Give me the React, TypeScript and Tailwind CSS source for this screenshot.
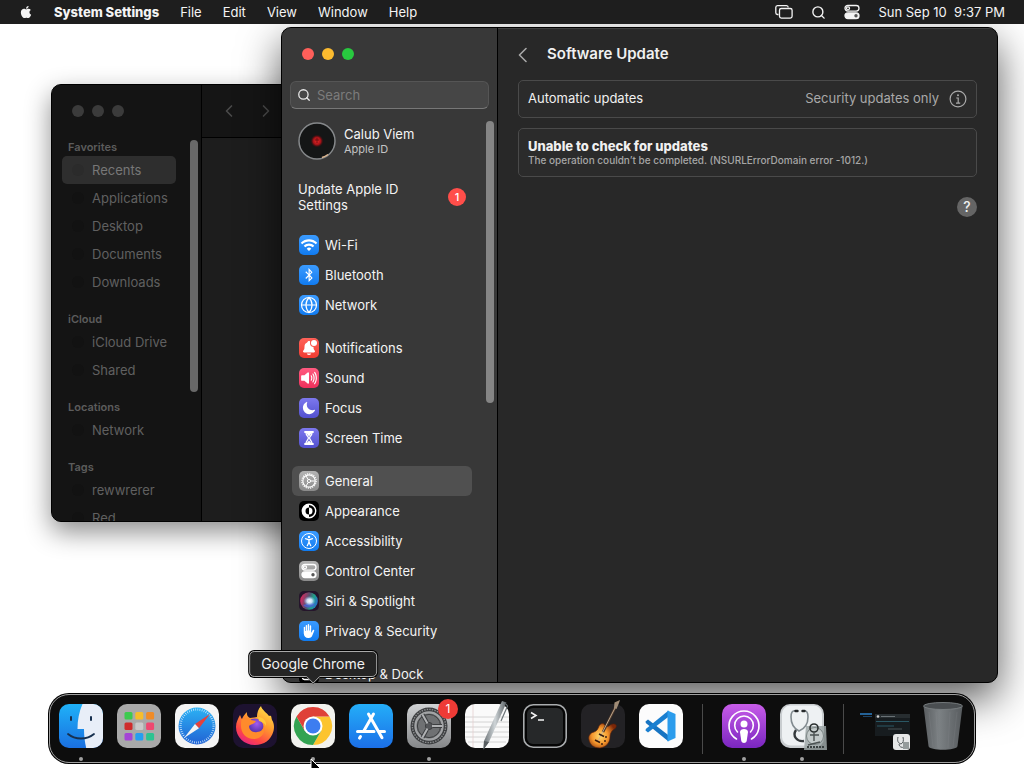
import type { ReactNode } from "react";
import { clsx } from "clsx";
import { FaApple, FaBluetoothB } from "react-icons/fa6";
import { IoHandLeft, IoMoon, IoNotifications, IoVolumeHigh } from "react-icons/io5";
import { MdWifi } from "react-icons/md";
import { ChevronLeft, ChevronRight, Globe, PersonStanding, Search } from "lucide-react";

const menus = ["File", "Edit", "View", "Window", "Help"];

const finderSections = [
  { title: "Favorites", items: ["Recents", "Applications", "Desktop", "Documents", "Downloads"] },
  { title: "iCloud", items: ["iCloud Drive", "Shared"] },
  { title: "Locations", items: ["Network"] },
  { title: "Tags", items: ["rewwrerer", "Red"] },
];

const blue = "bg-linear-to-b from-[#3a9bff] to-[#0f7bf0]";
const purple = "bg-linear-to-b from-[#7d78ee] to-[#5350cf]";
const gray = "bg-linear-to-b from-[#b4b4b4] to-[#8a8a8a]";

const settingsGroups: { label: string; tile: string; icon: ReactNode }[][] = [
  [
    { label: "Wi-Fi", tile: blue, icon: <MdWifi className="size-[18px]" /> },
    { label: "Bluetooth", tile: blue, icon: <FaBluetoothB className="size-3.5" /> },
    { label: "Network", tile: blue, icon: <Globe className="size-[18px]" strokeWidth={1.6} /> },
  ],
  [
    {
      label: "Notifications",
      tile: "bg-linear-to-b from-[#ff6259] to-[#f03a30]",
      icon: <BellIcon />,
    },
    {
      label: "Sound",
      tile: "bg-linear-to-b from-[#ff5a80] to-[#ee2f5b]",
      icon: <IoVolumeHigh className="size-[18px]" />,
    },
    { label: "Focus", tile: purple, icon: <IoMoon className="size-3.5" /> },
    { label: "Screen Time", tile: purple, icon: <HourglassIcon /> },
  ],
  [
    { label: "General", tile: gray, icon: <SmallGearIcon /> },
    { label: "Appearance", tile: "bg-black", icon: <AppearanceIcon /> },
    { label: "Accessibility", tile: blue, icon: <AccessibilityIcon /> },
    { label: "Control Center", tile: gray, icon: <SwitchesIcon className="size-4" /> },
    { label: "Siri & Spotlight", tile: "bg-[#25152b]", icon: <SiriIcon /> },
    { label: "Privacy & Security", tile: blue, icon: <IoHandLeft className="size-3.5" /> },
  ],
  [{ label: "Desktop & Dock", tile: "bg-black", icon: <DesktopIcon /> }],
];

function BellIcon() {
  return (
    <span className="relative">
      <IoNotifications className="size-4" />
      <span className="absolute top-0 right-0 size-1.5 rounded-full bg-white ring-1 ring-[#f8544b]" />
    </span>
  );
}

function HourglassIcon() {
  return (
    <svg viewBox="0 0 16 16" className="size-4" fill="none" stroke="currentColor" strokeWidth="1.3">
      <path d="M4 2h8M4 14h8" strokeWidth="1.8" strokeLinecap="round" />
      <path d="M5 2.5c0 3 2.4 4 2.4 5.500S5 11 5 13.500M11 2.500c0 3-2.400 4-2.400 5.500S11 11 11 13.500" />
      <path d="M5.500 3h5L8 6.500zM5.500 13.300 8 10.500l2.500 2.800z" fill="currentColor" stroke="none" />
    </svg>
  );
}

function SmallGearIcon() {
  return (
    <svg viewBox="0 0 16 16" className="size-4" fill="none" stroke="currentColor">
      <circle cx="8" cy="8" r="7.200" strokeWidth="1.200" strokeDasharray="1.100 1.162" />
      <circle cx="8" cy="8" r="6.200" strokeWidth="1.200" />
      <circle cx="8" cy="8" r="1.600" />
      <path d="M9.600 8h4.200M7.200 6.600 5 2.900M7.200 9.400 5 13.100" />
    </svg>
  );
}

function AppearanceIcon() {
  return (
    <svg viewBox="0 0 16 16" className="size-4">
      <circle cx="8" cy="8" r="6.700" fill="#000" stroke="#fff" strokeWidth="1.400" />
      <path d="M8 1.300a6.700 6.700 0 0 0 0 13.400z" fill="#fff" />
      <path d="M8 4.500a3.500 3.500 0 0 1 0 7z" fill="#fff" />
      <path d="M8 4.500a3.500 3.500 0 0 0 0 7z" fill="#000" />
    </svg>
  );
}

function AccessibilityIcon() {
  return (
    <span className="flex size-4 items-center justify-center rounded-full border border-white">
      <PersonStanding className="size-3.5" strokeWidth={2.2} />
    </span>
  );
}

function SwitchesIcon({ className }: { className?: string }) {
  return (
    <svg viewBox="0 0 16 16" className={className} fill="none" stroke="currentColor" strokeWidth="1.300">
      <rect x="1" y="1.500" width="14" height="5.600" rx="2.800" />
      <circle cx="4" cy="4.300" r="1.500" />
      <rect x="1" y="8.900" width="14" height="5.800" rx="2.900" fill="currentColor" />
      <circle cx="12" cy="11.800" r="1.700" fill="#555" stroke="none" />
    </svg>
  );
}

function SiriIcon() {
  return (
    <svg viewBox="0 0 20 20" className="size-5">
      <defs>
        <linearGradient id="siri-ring" x1="0" y1="0.300" x2="1" y2="0.600">
          <stop offset="0" stopColor="#e2265f" />
          <stop offset="0.450" stopColor="#54526f" />
          <stop offset="0.700" stopColor="#1fa287" />
          <stop offset="1" stopColor="#2a6fd0" />
        </linearGradient>
        <radialGradient id="siri-core">
          <stop offset="0" stopColor="#fff" />
          <stop offset="0.450" stopColor="#d8e8ff" stopOpacity="0.900" />
          <stop offset="1" stopColor="#7fb4e8" stopOpacity="0" />
        </radialGradient>
      </defs>
      <circle cx="10" cy="10" r="8.800" fill="url(#siri-ring)" />
      <path d="M4 14c4-1 7-4 12-1-2 4-8 5-12 1z" fill="#4b62d8" opacity="0.800" />
      <ellipse cx="10.500" cy="10" rx="6" ry="5" fill="url(#siri-core)" />
    </svg>
  );
}

function DesktopIcon() {
  return (
    <svg viewBox="0 0 16 16" className="size-4" fill="none" stroke="currentColor" strokeWidth="1.400">
      <rect x="1.500" y="2.500" width="13" height="11" rx="2" />
      <path d="M4 11h8" />
    </svg>
  );
}

function StageIcon() {
  return (
    <svg viewBox="0 0 18 14" className="h-3.5 w-[18px]" fill="none" stroke="currentColor" strokeWidth="1.300">
      <path d="M3.500 9.500h-1A1.800 1.800 0 0 1 .8 7.700V2.500A1.800 1.800 0 0 1 2.500.7h9a1.800 1.800 0 0 1 1.700 1.800" />
      <rect x="4.500" y="3.500" width="12.600" height="9.600" rx="1.800" />
    </svg>
  );
}

function MenuBar() {
  return (
    <header className="relative z-30 flex h-6 items-center justify-between bg-[#1e1e1e] pr-[19px] pl-[19px] text-[13px] leading-4 text-[#f4f4f4]">
      <nav className="flex items-center gap-[21px]">
        <button aria-label="Apple menu">
          <FaApple className="size-3.5" />
        </button>
        <button className="font-extrabold">System Settings</button>
        {menus.map((menu) => (
          <button key={menu}>{menu}</button>
        ))}
      </nav>
      <div className="flex items-center gap-[18px]">
        <button aria-label="Stage Manager">
          <StageIcon />
        </button>
        <button aria-label="Spotlight">
          <Search className="size-[15px]" strokeWidth={2.2} />
        </button>
        <button aria-label="Control Center">
          <SwitchesIcon className="size-4" />
        </button>
        <button className="whitespace-pre">{"Sun Sep 10  9:37 PM"}</button>
      </div>
    </header>
  );
}

function TrafficLights({ active }: { active?: boolean }) {
  return (
    <div className="flex gap-2">
      <button aria-label="Close" className={clsx("size-3 rounded-full", active ? "bg-[#ff5f5a]" : "bg-[#3b3b3b]")} />
      <button aria-label="Minimize" className={clsx("size-3 rounded-full", active ? "bg-[#fcbb2f]" : "bg-[#3b3b3b]")} />
      <button aria-label="Zoom" className={clsx("size-3 rounded-full", active ? "bg-[#28c93f]" : "bg-[#3b3b3b]")} />
    </div>
  );
}

function FinderWindow() {
  return (
    <section
      aria-label="Finder"
      className="absolute top-[84px] left-[51px] flex h-[438px] w-[600px] overflow-hidden rounded-[10px] border border-black bg-[#1d1d1d] shadow-[0_10px_26px_rgba(0,0,0,0.450)]"
    >
      <aside className="relative w-[150px] shrink-0 border-r border-black bg-[#141414]">
        <div className="flex h-[53px] items-center pb-0.5 pl-5">
          <TrafficLights />
        </div>
        <div className="flex flex-col gap-3.5 pr-[25px] pl-2.5">
          {finderSections.map((section) => (
            <div key={section.title}>
              <h2 className="pl-1.5 text-[11px] leading-[18px] font-semibold text-[#5c5c5c]">{section.title}</h2>
              {section.items.map((item) => (
                <a
                  key={item}
                  href="#"
                  className={clsx(
                    "flex h-7 items-center gap-2 rounded-[5px] pl-2.5 text-[13px] leading-4 whitespace-nowrap",
                    item === "Recents" ? "bg-[#2e2e2e] text-[#777777]" : "text-[#606060]"
                  )}
                >
                  <span className={clsx("size-3 rounded-full", item === "Recents" ? "bg-[#2b2b2b]" : "bg-[#121212]")} />
                  {item}
                </a>
              ))}
            </div>
          ))}
        </div>
        <div className="absolute top-[55px] right-[3px] h-[252px] w-2 rounded-full bg-[#686868]" />
      </aside>
      <div className="grow">
        <div className="flex h-[53px] items-center gap-[17px] border-b border-black bg-[#151515] pl-[17px] text-[#4a4a4a]">
          <button aria-label="Back">
            <ChevronLeft className="size-5" />
          </button>
          <button aria-label="Forward">
            <ChevronRight className="size-5" />
          </button>
        </div>
      </div>
    </section>
  );
}

function SettingsSidebar() {
  return (
    <aside className="relative flex w-[216px] shrink-0 flex-col border-r border-black bg-[#383838]">
      <div className="flex h-[53px] shrink-0 items-center pb-0.5 pl-5">
        <TrafficLights active />
      </div>
      <label className="mx-2 flex h-7 shrink-0 items-center gap-1.5 rounded-md border border-[#555555] border-b-[#777777] bg-[#464646] px-1.5">
        <Search className="size-3.5 shrink-0 text-[#e8e8e8]" strokeWidth={2.2} />
        <input
          type="text"
          aria-label="Search"
          placeholder="Search"
          className="h-4 w-full min-w-0 bg-transparent text-[13px] leading-4 text-white outline-none placeholder:text-[#7c7c7c]"
        />
      </label>
      <nav className="mt-3 ml-2.5 min-h-0 w-[180px] grow text-[13px] leading-4 text-[#f4f4f4]">
        <a href="#" className="flex h-10 items-center gap-2 px-1.5">
          <Avatar />
          <span>
            <span className="block">Calub Viem</span>
            <span className="block text-[11px] leading-3.5 text-[#c4c4c4]">Apple ID</span>
          </span>
        </a>
        <a href="#" className="mt-5 flex h-8 items-center justify-between px-1.5">
          <span className="w-28">Update Apple ID Settings</span>
          <span className="flex size-[18px] items-center justify-center rounded-full bg-[#ff4e4a] text-[11px] font-medium text-white">
            1
          </span>
        </a>
        <div className="mt-[17px] flex flex-col gap-[13px]">
          {settingsGroups.map((group) => (
            <ul key={group[0].label}>
              {group.map(({ label, tile, icon }) => (
                <li key={label}>
                  <a
                    href="#"
                    className={clsx(
                      "flex h-[30px] items-center gap-1.5 rounded-md px-[7px]",
                      label === "General" && "bg-[#505050]"
                    )}
                  >
                    <span className={clsx("flex size-5 items-center justify-center rounded-[5px] text-white", tile)}>
                      {icon}
                    </span>
                    {label}
                  </a>
                </li>
              ))}
            </ul>
          ))}
        </div>
      </nav>
      <div className="absolute top-[93px] right-[3px] h-[282px] w-2 rounded-full bg-[#858585]" />
    </aside>
  );
}

function Avatar() {
  return (
    <svg viewBox="0 0 38 38" className="size-[38px] shrink-0">
      <defs>
        <radialGradient id="avatar-eye">
          <stop offset="0" stopColor="#f02a2a" />
          <stop offset="0.600" stopColor="#a01217" />
          <stop offset="1" stopColor="#400a0c" stopOpacity="0" />
        </radialGradient>
      </defs>
      <circle cx="19" cy="19" r="18" fill="#141616" stroke="#85888a" strokeWidth="1.500" />
      <path d="M24 35.500a18 18 0 0 0 6-3" stroke="#e0b890" strokeWidth="1.500" fill="none" />
      <circle cx="19" cy="19" r="6.500" fill="url(#avatar-eye)" />
      <path d="M17 18h4M19 16v5" stroke="#5a0a0c" strokeWidth="0.800" />
    </svg>
  );
}

function SettingsWindow() {
  return (
    <section
      aria-label="System Settings"
      className="absolute top-[27px] left-[281px] z-10 flex h-[656px] w-[717px] overflow-hidden rounded-[10px] border border-black bg-[#282828] shadow-[0_16px_42px_rgba(0,0,0,0.650)]"
    >
      <SettingsSidebar />
      <main className="grow border-t border-[#3f3f3f] px-5 text-[#f0f0f0]">
        <div className="flex h-[51px] items-center gap-5">
          <button aria-label="Back">
            <svg viewBox="0 0 9 16" className="h-4 w-[9px]" fill="none" stroke="#a8a8a8" strokeWidth="1.600" strokeLinecap="round" strokeLinejoin="round">
              <path d="M8 1.500 1.500 8 8 14.500" />
            </svg>
          </button>
          <h1 className="text-[15px] font-semibold">Software Update</h1>
        </div>
        <div className="flex h-[38px] items-center justify-between rounded-[5px] border border-[#4a4a4a] bg-[#2b2b2b] px-[9px] text-[13px]">
          <span>Automatic updates</span>
          <span className="flex items-center gap-2.5 text-[#a9a9a9]">
            Security updates only
            <button aria-label="About automatic updates">
              <svg viewBox="0 0 18 18" className="size-[18px]" fill="none" stroke="currentColor" strokeWidth="1.200">
                <circle cx="9" cy="9" r="7.900" />
                <circle cx="9" cy="5.200" r="1" fill="currentColor" stroke="none" />
                <path d="M7.200 8h2v5M7 13.200h4.200" />
              </svg>
            </button>
          </span>
        </div>
        <div className="mt-2.5 flex h-[49px] flex-col justify-center rounded-[5px] border border-[#4a4a4a] bg-[#2b2b2b] px-[9px]">
          <h2 className="text-[13px] leading-[15px] font-extrabold">Unable to check for updates</h2>
          <p className="text-[10px] leading-[13px] font-medium text-[#a6a6a6]">
            The operation couldn’t be completed. (NSURLErrorDomain error -1012.)
          </p>
        </div>
        <div className="mt-5 flex justify-end">
          <button className="size-5 rounded-full bg-[#656565] text-[14px] leading-5 font-medium">?</button>
        </div>
      </main>
    </section>
  );
}

// Dock artwork, drawn on a 44 unit tile

function FinderArt() {
  return (
    <>
      <defs>
        <linearGradient id="finder-a" x2="0" y2="1">
          <stop stopColor="#1fb1f8" />
          <stop offset="1" stopColor="#1a6fe0" />
        </linearGradient>
        <clipPath id="finder-clip">
          <rect width="44" height="44" rx="10" />
        </clipPath>
      </defs>
      <g clipPath="url(#finder-clip)">
        <rect width="44" height="44" fill="url(#finder-a)" />
        <path d="M23.500 0C20 8 18.500 16 18.500 25h6.500c0 7 .8 13 2.200 19H44V0z" fill="#e8eef8" />
      </g>
      <path d="M12 13v3M32 13v3" stroke="#17304f" strokeWidth="2" strokeLinecap="round" />
      <path d="M9 30c7 6 19 6 26 0" stroke="#17304f" strokeWidth="1.800" strokeLinecap="round" fill="none" />
    </>
  );
}

const padColors = ["#3cca4e", "#f6bd2b", "#f08b26", "#cf2b2b", "#c9c9c9", "#ee4870", "#a444d6", "#269ef0", "#2cc391"];

function LaunchpadArt() {
  return (
    <>
      <rect width="44" height="44" rx="10" fill="#a9a9a9" />
      {padColors.map((color, i) => (
        <rect key={color} x={7.5 + (i % 3) * 10.8} y={8 + Math.floor(i / 3) * 10.500} width="8" height="7.500" rx="1.500" fill={color} />
      ))}
    </>
  );
}

function SafariArt() {
  return (
    <>
      <defs>
        <linearGradient id="safari-a" x2="0" y2="1">
          <stop stopColor="#2cb2f4" />
          <stop offset="1" stopColor="#2162d4" />
        </linearGradient>
      </defs>
      <rect width="44" height="44" rx="10" fill="#f4f4f4" />
      <circle cx="22" cy="22" r="18.500" fill="url(#safari-a)" />
      <circle cx="22" cy="22" r="16.500" fill="none" stroke="#d4ecff" strokeWidth="2.200" strokeDasharray="0.700 1.460" />
      <path d="M35 10 24 24.200 20 20z" fill="#e5413c" />
      <path d="M9 34l11-14 4 4.200z" fill="#f3f3f3" />
    </>
  );
}

function FirefoxArt() {
  return (
    <>
      <defs>
        <linearGradient id="fox-a" x1="0.800" y1="0" x2="0.200" y2="1">
          <stop stopColor="#ffe14a" />
          <stop offset="0.400" stopColor="#ff9a2e" />
          <stop offset="0.750" stopColor="#ff4546" />
          <stop offset="1" stopColor="#e3208a" />
        </linearGradient>
        <radialGradient id="fox-b" cx="0.600" cy="0.300">
          <stop stopColor="#a45cf0" />
          <stop offset="1" stopColor="#5a34b0" />
        </radialGradient>
      </defs>
      <rect width="44" height="44" rx="10" fill="#1d1230" />
      <path
        d="M28 2c1 4 5 6 8 10 3-1 2 1 3 4 2 3 2.500 7 1.500 11C38 36 31 41 22 41 11 41 3 33 3 23c0-5 2-8 4-12 1 2 1 3 2 4 1-3 3-5 5-7-.5 3 1 5 3 6l7-1c0-4 1-8 4-11z"
        fill="url(#fox-a)"
      />
      <circle cx="22" cy="23" r="8.500" fill="url(#fox-b)" />
      <path d="M9 15c4-2 7-1 9 1l5 1c-1 3-5 3-7 5 0 4 4 7 8 6 4 0 6-3 7-6 2 7-3 13-10 13-8 0-13-6-13-13 0-3 0-5 1-7z" fill="#ff8b2c" />
      <path d="M25 13c5 0 9 4 8 9-1-3-4-4-7-5z" fill="#ffc83a" />
    </>
  );
}

function ChromeArt() {
  return (
    <>
      <rect width="44" height="44" rx="10" fill="#f2f2ee" />
      <path d="M38.500 12.500A19 19 0 0 1 22 41l8.200-14.300L22 12.500z" fill="#fcc42e" />
      <path d="M5.500 12.500A19 19 0 0 0 22 41l8.200-14.300L22 31l-8.200-4.300z" fill="#33a352" />
      <path d="M22 12.500h16.500A19 19 0 0 0 5.500 12.500l8.300 14.200z" fill="#df4138" />
      <circle cx="22" cy="22" r="9.500" fill="#fff" />
      <circle cx="22" cy="22" r="7.500" fill="#3d7df0" />
    </>
  );
}

function AppStoreArt() {
  return (
    <>
      <defs>
        <linearGradient id="store-a" x2="0" y2="1">
          <stop stopColor="#24aef8" />
          <stop offset="1" stopColor="#1b6fe8" />
        </linearGradient>
      </defs>
      <rect width="44" height="44" rx="10" fill="url(#store-a)" />
      <path d="M24.500 10 14.500 27.500M11.500 32.500l-1 1.600M19.500 10l13.500 23.800M8.500 27.500h16.500M30.500 27.500h5" stroke="#fff" strokeWidth="3" strokeLinecap="round" />
    </>
  );
}

function SettingsArt() {
  return (
    <>
      <defs>
        <linearGradient id="prefs-a" x2="0" y2="1">
          <stop stopColor="#d0d2d4" />
          <stop offset="1" stopColor="#858789" />
        </linearGradient>
      </defs>
      <rect width="44" height="44" rx="10" fill="url(#prefs-a)" />
      <circle cx="22" cy="22" r="18.500" fill="#3c3e40" />
      <circle cx="22" cy="22" r="16.600" fill="none" stroke="#8d8f91" strokeWidth="1.400" strokeDasharray="1.400 1.200" />
      <circle cx="22" cy="22" r="13.600" fill="#6f7173" stroke="#a2a4a6" strokeWidth="2.200" />
      <circle cx="22" cy="22" r="11.600" fill="none" stroke="#3c3e40" strokeWidth="1" />
      <circle cx="22" cy="22" r="3.600" fill="#55575a" stroke="#3c3e40" strokeWidth="1" />
      <path d="M26 22h9M20 18.500 15.500 10.500M20 25.500 15.500 33.500" stroke="#3c3e40" strokeWidth="4" />
      <path d="M25 22h10.500M20.500 19.400 15.300 10.300M20.500 24.600 15.300 33.700" stroke="#b0b2b4" strokeWidth="2" />
    </>
  );
}

function TextEditArt() {
  return (
    <>
      <defs>
        <linearGradient id="pen-a">
          <stop stopColor="#6b7276" />
          <stop offset="0.500" stopColor="#cfd5d8" />
          <stop offset="1" stopColor="#596064" />
        </linearGradient>
      </defs>
      <rect width="44" height="44" rx="10" fill="#fafafa" />
      <path d="M0 13h44M0 18h44M0 23h44M0 28h44M0 33h44M3 38h38" stroke="#c9c9c9" strokeWidth="0.800" />
      <path d="M8 1v42" stroke="#e4cfcf" strokeWidth="0.800" />
      <path d="M37-3 41.500-1.500 24 38l-5.500 7.500L19 37z" fill="url(#pen-a)" />
      <path d="M41 0 42.500 2 36 17" stroke="#6c7478" strokeWidth="1.200" fill="none" />
      <path d="M19 37l5 1-5.500 7.500z" fill="#575d60" />
    </>
  );
}

function TerminalArt() {
  return (
    <>
      <rect x="0.800" y="0.800" width="42.400" height="42.400" rx="9.500" fill="#050505" stroke="#a9acae" strokeWidth="1.600" />
      <rect x="4" y="4" width="36" height="36" rx="6" fill="#262829" />
      <path d="M8 8.500l5 3-5 3M15 16h6" stroke="#f2f2f2" strokeWidth="1.600" fill="none" />
    </>
  );
}

function GarageBandArt() {
  return (
    <>
      <defs>
        <radialGradient id="guitar-a" gradientUnits="userSpaceOnUse" cx="19" cy="32" r="16">
          <stop stopColor="#ffdc70" />
          <stop offset="0.500" stopColor="#f5962c" />
          <stop offset="1" stopColor="#7c2708" />
        </radialGradient>
      </defs>
      <rect width="44" height="44" rx="10" fill="#232225" />
      <path
        d="M8 36c-1-4 1-7 5-8 3-1 4-3 5-6 1-2 3-3 5-2 1 2 3 3 5 2 2-2 5-3 7-1 1 2-1 4-3 5-2 2-3 4-3 7 0 6-4 10-10 11-6 0-10-3-11-8z"
        fill="url(#guitar-a)"
        stroke="#5a2008"
        strokeWidth="0.600"
      />
      <path d="M22 28 34.500 3" stroke="#4a372a" strokeWidth="2.600" />
      <path d="M17 37 34.500 3" stroke="#cbb195" strokeWidth="0.900" />
      <path d="M33 4 33.500-1.500 39-4l-1 3-2.500 6z" fill="#a08c76" />
      <path d="M14 36l5 2.500M18 30l5 2.500" stroke="#3a1c10" strokeWidth="1.600" />
      <path d="M25 33v.1M24 37v.1M21 40v.1" stroke="#30170c" strokeWidth="1.800" strokeLinecap="round" />
    </>
  );
}

function CodeArt() {
  return (
    <>
      <rect width="44" height="44" rx="10" fill="#fcfcfc" />
      <path d="M6.500 17.500 9 15.500l20.500 15.800v6.200L6.800 19z" fill="#1774c2" />
      <path d="M6.500 26.500 9 28.500l20.500-15.800V6.500L6.800 25z" fill="#1a7fd0" />
      <path d="M28.500 6.500 36.500 10v24l-8 3.500z" fill="#2b9cec" />
    </>
  );
}

function PodcastArt() {
  return (
    <>
      <defs>
        <linearGradient id="pod-a" x2="0" y2="1">
          <stop stopColor="#c75ce8" />
          <stop offset="1" stopColor="#7a26c0" />
        </linearGradient>
      </defs>
      <rect width="44" height="44" rx="10" fill="url(#pod-a)" />
      <g fill="none" stroke="#fff" strokeWidth="1.600" strokeLinecap="round">
        <path d="M14.500 35a15 15 0 1 1 15 0" />
        <path d="M15.500 28a9.300 9.300 0 1 1 13 0" />
      </g>
      <circle cx="22" cy="20" r="3.500" fill="#fff" />
      <path d="M18 28c0-4 8-4 8 0l-1.300 9c-.600 2.500-4.800 2.500-5.400 0z" fill="#fff" />
    </>
  );
}

function StethoscopeArt() {
  return (
    <>
      <rect width="44" height="44" rx="10" fill="#c9cdd0" />
      <rect x="2" y="1.500" width="40" height="40" rx="8.500" fill="#eef1f3" />
      <g fill="none" stroke="#828b90" strokeWidth="1.600">
        <path d="M16 7c-4-1-5 2-5 6 0 8 4 12 8 14 5-2 9-7 9-14 0-4-1-7-5-6" />
        <path d="M16 26c-4 6 1 12 8 11" stroke="#34393c" strokeWidth="2.400" />
      </g>
      <path d="M15.500 7h2M22.500 7h2" stroke="#26292b" strokeWidth="2.400" strokeLinecap="round" />
      <path d="M26 22h20l1 24H24z" fill="#9da7a7" fillOpacity="0.850" />
      <circle cx="35" cy="32" r="8.500" fill="#c3caca" stroke="#7c8585" />
      <circle cx="34" cy="24" r="4" fill="none" stroke="#2b3030" strokeWidth="1.600" />
      <path d="M30 31h9M34 27v10M28 41l12-3" stroke="#4b5252" strokeWidth="1.400" />
      <path d="M27 43h17" stroke="#3a4141" strokeWidth="2" strokeDasharray="2 1" />
    </>
  );
}

function MinimizedArt() {
  return (
    <>
      <path d="M-3 10h12" stroke="#276ca8" strokeWidth="1.800" />
      <path d="M9 12.500h-9" stroke="#1d4568" />
      <rect x="12" y="10" width="35" height="22" fill="#171c1f" />
      <path d="M12 12h35" stroke="#272d30" strokeWidth="4" />
      <circle cx="15" cy="12.500" r="1.300" fill="#d4d4d4" />
      <path d="M18 12.500h14" stroke="#697175" />
      <path d="M13 17.500h33M14 22h17" stroke="#2a5764" />
      <path d="M25 25h14" stroke="#495054" />
      <rect x="30" y="30" width="17" height="16" rx="3" fill="#e6e8e8" />
      <path d="M35 33c-1 4 0 6 3 7 2-1 3-3 2-7M36 40c0 3 3 4 5 3" stroke="#555b5e" fill="none" />
      <path d="M40 38h6v7h-6z" fill="#949b9b" />
    </>
  );
}

function TrashArt() {
  return (
    <>
      <defs>
        <linearGradient id="trash-a">
          <stop stopColor="#5a5e61" />
          <stop offset="0.400" stopColor="#7c8184" />
          <stop offset="1" stopColor="#585c5f" />
        </linearGradient>
      </defs>
      <path d="M2.500 2h39l-5 40c-.500 5-28.500 5-29 0z" fill="url(#trash-a)" />
      <ellipse cx="22" cy="2" rx="19.500" ry="3.500" fill="#4a4e51" stroke="#7b8082" strokeWidth="0.900" />
      <path d="M8 8l4 35M15 8l2 36M29 8l-2 36M36 8l-4 35" stroke="#989da0" strokeOpacity="0.150" />
    </>
  );
}

type DockApp = { name: string; art: ReactNode; running?: boolean; badge?: number; tip?: boolean };

const dockGroups: DockApp[][] = [
  [
    { name: "Finder", art: <FinderArt />, running: true },
    { name: "Launchpad", art: <LaunchpadArt /> },
    { name: "Safari", art: <SafariArt /> },
    { name: "Firefox", art: <FirefoxArt /> },
    { name: "Google Chrome", art: <ChromeArt />, running: true, tip: true },
    { name: "App Store", art: <AppStoreArt /> },
    { name: "System Settings", art: <SettingsArt />, running: true, badge: 1 },
    { name: "TextEdit", art: <TextEditArt /> },
    { name: "Terminal", art: <TerminalArt /> },
    { name: "GarageBand", art: <GarageBandArt /> },
    { name: "Visual Studio Code", art: <CodeArt /> },
  ],
  [
    { name: "Podcasts", art: <PodcastArt />, running: true },
    { name: "Wireless Diagnostics", art: <StethoscopeArt />, running: true },
  ],
  [
    { name: "Minimized window", art: <MinimizedArt /> },
    { name: "Trash", art: <TrashArt /> },
  ],
];

function DockTooltip({ name }: { name: string }) {
  return (
    <div role="tooltip" className="absolute bottom-[85px] left-1/2 -translate-x-1/2">
      <div className="rounded-[5px] border border-[#a8a8a8] bg-[#252525] px-[11px] text-[14px] leading-6 whitespace-nowrap text-[#f0f0f0] ring-1 ring-black">
        {name}
      </div>
      <svg viewBox="0 0 20 8" className="absolute top-[25px] left-1/2 h-2 w-5 -translate-x-1/2">
        <path d="M2 0h16L10 8z" fill="#252525" />
        <path d="M2 .500h1.500L10 7l6.500-6.500H18" fill="none" stroke="#a8a8a8" />
      </svg>
    </div>
  );
}

function DockItem({ app }: { app: DockApp }) {
  return (
    <div className="relative flex h-[67px] w-[58px] justify-center pt-[9px]">
      <button aria-label={app.name} className="size-11">
        <svg viewBox="0 0 44 44" className="size-11 overflow-visible">
          {app.art}
        </svg>
      </button>
      {app.badge && (
        <span className="absolute top-[4px] right-0 flex size-5 items-center justify-center rounded-full bg-[#ee3b36] text-[12px] text-white">
          {app.badge}
        </span>
      )}
      {app.running && <span className="absolute bottom-px left-1/2 size-1 -translate-x-1/2 rounded-full bg-[#a0a0a0]" />}
      {app.tip && <DockTooltip name={app.name} />}
    </div>
  );
}

function Dock() {
  return (
    <footer className="absolute inset-x-0 bottom-[5px] z-20 flex justify-center">
      <div className="flex rounded-[20px] border border-[#a0a0a0] bg-[#0d0d0d] px-0.5 ring-1 ring-black">
        {dockGroups.map((group, i) => (
          <div key={group[0].name} className="flex">
            {i > 0 && (
              <div className="flex w-[25px] items-center justify-center">
                <div className="h-[50px] w-px bg-[#4a4a4a]" />
              </div>
            )}
            {group.map((app) => (
              <DockItem key={app.name} app={app} />
            ))}
          </div>
        ))}
      </div>
    </footer>
  );
}

export default function App() {
  return (
    <div className="relative h-screen w-full cursor-default overflow-hidden bg-white font-['Inter',sans-serif]">
      <MenuBar />
      <FinderWindow />
      <SettingsWindow />
      <Dock />
      <svg viewBox="0 0 12 18" className="absolute top-[758px] left-[310px] z-40 h-[18px] w-3">
        <path d="M1 1v14l3.300-3 2.200 5 2.400-1-2.200-5H11z" fill="#000" stroke="#fff" strokeWidth="1" />
      </svg>
    </div>
  );
}
